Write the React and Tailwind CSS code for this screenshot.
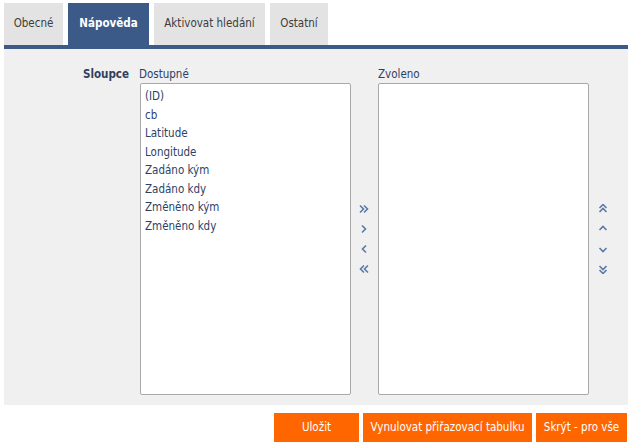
import React from "react";

const tabs = [
  { label: "Obecné", w: "w-[59px]" },
  { label: "Nápověda", w: "w-[81px]" },
  { label: "Aktivovat hledání", w: "w-[111px]" },
  { label: "Ostatní", w: "w-[58px]" },
];
const columns = ["(ID)", "cb", "Latitude", "Longitude", "Zadáno kým", "Zadáno kdy", "Změněno kým", "Změněno kdy"];

const Chevron = ({ dir, double }) => {
  const paths = {
    right: "M2 1.5 L5.5 5 L2 8.5",
    left: "M6 1.5 L2.5 5 L6 8.5",
    up: "M1.5 6 L5 2.5 L8.5 6",
    down: "M1.5 4 L5 7.5 L8.5 4",
  };
  const horiz = dir === "left" || dir === "right";
  const a = horiz ? "translate(-2 0)" : "translate(0 -2)";
  const b = horiz ? "translate(2 0)" : "translate(0 2)";
  return (
    <svg width="10" height="10" viewBox="0 0 10 10" className="block">
      <g fill="none" stroke="#5a78a8" strokeWidth="1.6" transform={horiz ? "translate(1 0)" : ""}>
        {double ? (
          <>
            <path d={paths[dir]} transform={a} />
            <path d={paths[dir]} transform={b} />
          </>
        ) : (
          <path d={paths[dir]} />
        )}
      </g>
    </svg>
  );
};

export default function App() {
  return (
    <div
      className="w-[630px] h-[444px] bg-white overflow-hidden text-[11.5px]"
      style={{ fontFamily: '"DejaVu Sans Condensed", "DejaVu Sans", sans-serif' }}
    >
      <div className="pl-[4px] pr-[2px] pt-[3px]">
        {/* tabs */}
        <div className="flex gap-[5px] h-[42px]">
          {tabs.map((t, i) => (
            <div
              key={t.label}
              className={
                i === 1
                  ? `${t.w} h-full flex items-center justify-center bg-[#3b5a87] text-white font-bold`
                  : `${t.w} h-full flex items-center justify-center bg-[#e3e3e3] text-[#3d3d3d]`
              }
            >
              {t.label}
            </div>
          ))}
        </div>
        <div className="h-[4px] bg-[#3b5a87]" />

        {/* panel */}
        <div className="bg-[#f0f0f0] h-[356px] pr-[2px] flex pt-[17px]">
          <div className="w-[136px] text-right pr-[11px] font-bold text-[#2e3f5f] leading-[16px]">
            Sloupce
          </div>
          <div className="flex">
            <div className="flex flex-col">
              <div className="text-[#2e3f66] leading-[16px] h-[16px] -ml-[1px]">Dostupné</div>
              <div className="mt-[1px] w-[211px] h-[312px] bg-white border border-[#a9a9a9] rounded-[2px] px-[4px] pt-[3px] text-[#2e3f66] leading-[18.5px]">
                {columns.map((c) => (
                  <div key={c}>{c}</div>
                ))}
              </div>
            </div>
            <div className="w-[25px] flex flex-col items-center justify-center gap-[10px] pt-[7px]">
              <Chevron dir="right" double />
              <Chevron dir="right" />
              <Chevron dir="left" />
              <Chevron dir="left" double />
            </div>
            <div className="flex flex-col ml-[2px]">
              <div className="text-[#2e3f66] leading-[16px] h-[16px]">Zvoleno</div>
              <div className="mt-[1px] w-[211px] h-[312px] bg-white border border-[#a9a9a9] rounded-[2px]" />
            </div>
            <div className="w-[27px] flex flex-col items-center justify-center gap-[10px] pt-[7px]">
              <Chevron dir="up" double />
              <Chevron dir="up" />
              <Chevron dir="down" />
              <Chevron dir="down" double />
            </div>
          </div>
        </div>

        {/* buttons */}
        <div className="flex justify-end gap-[4px] mt-[8px] pr-[1px]">
          <button className="w-[85px] h-[29px] bg-[#ff6600] text-white">Uložit</button>
          <button className="w-[169px] h-[29px] bg-[#ff6600] text-white">Vynulovat přiřazovací tabulku</button>
          <button className="w-[91px] h-[29px] bg-[#ff6600] text-white">Skrýt - pro vše</button>
        </div>
      </div>
    </div>
  );
}
